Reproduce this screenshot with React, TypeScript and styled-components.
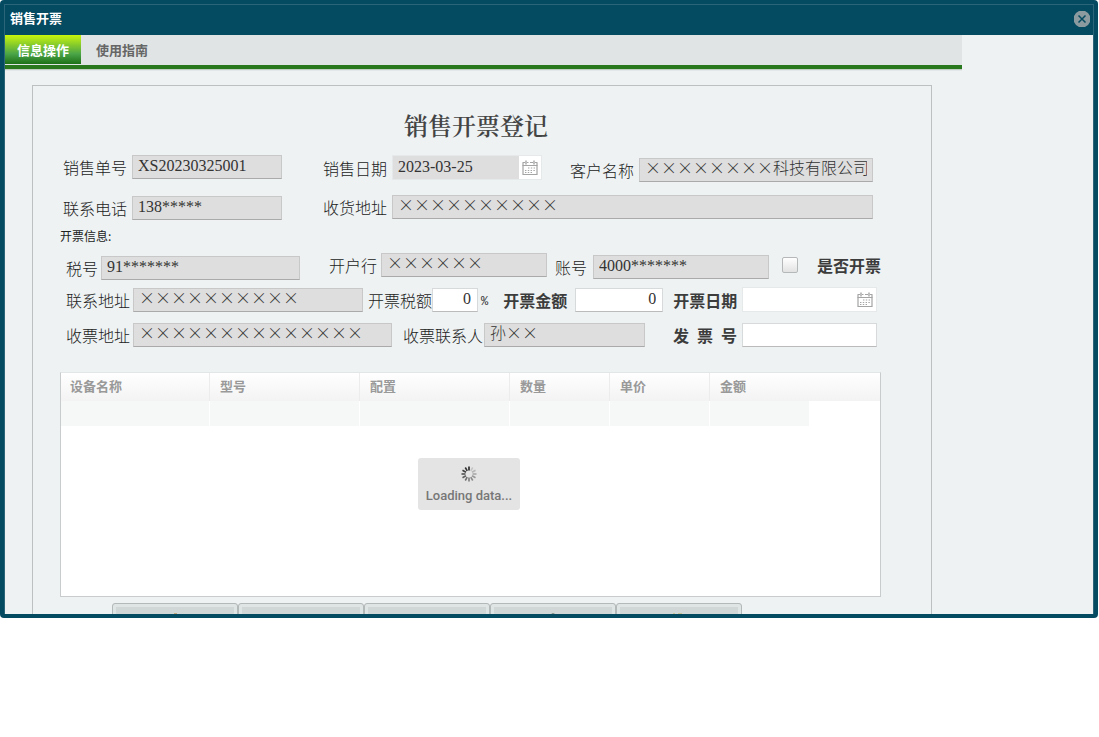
import React from "react";
import styled, { createGlobalStyle, css } from "styled-components";

const GlobalStyle = createGlobalStyle`
  *, *::before, *::after { box-sizing: border-box; }
  body { margin: 0; background: #fff; color: #333; font-family: "Liberation Serif", "Noto Sans CJK SC", serif; }
`;

const uiFont = `"Liberation Sans", "Noto Sans CJK SC", sans-serif`;

const Dialog = styled.section`
  margin-right: 1px;
  padding: 4px;
  background: #044a60;
  border-radius: 4px;
`;

const DialogInner = styled.div`
  display: flex;
  flex-direction: column;
  border: 1px solid #2b6579;
  border-bottom: 0;
`;

const DialogHeader = styled.header`
  display: flex;
  align-items: center;
  justify-content: space-between;
  height: 31px;
  padding: 0 3px 3px 5px;
  border-bottom: 1px solid #2b6579;
`;

const DialogTitle = styled.h1`
  margin: 0;
  font: bold 13px/20px ${uiFont};
  color: #fff;
`;

const CloseButton = styled.button`
  display: flex;
  padding: 0;
  border: 0;
  background: none;
  cursor: pointer;
`;

const Viewport = styled.div`
  height: 579px;
  margin-top: -1px;
  overflow: hidden;
  background: #eef2f3;
`;

const Page = styled.main`
  width: 100%;
  max-width: 957px;
`;

const Tabs = styled.nav`
  display: flex;
  height: 34px;
  background: #e0e4e4;
  border-bottom: 4px solid #2a781d;
  box-shadow: 0 1px 0 #c2d0c4, 0 2px 0 #e2e8e8;
`;

const Tab = styled.button<{ $active?: boolean }>`
  height: 29px;
  padding: 2px 12px 0;
  border: 0;
  background: none;
  color: #666;
  font: bold 13px/20px ${uiFont};
  cursor: pointer;
  & + & { padding: 2px 15px 0; }
  ${(p) =>
    p.$active &&
    css`
      color: #fff;
      background: linear-gradient(#c8f50c, #4ba548 65%, #1d7016);
    `}
`;

const Panel = styled.form`
  height: 700px;
  margin: 16px 30px 0 27px;
  padding: 25px 39px 0 27px;
  border: 1px solid #bcc0c1;
`;

const FormTitle = styled.h2`
  margin: 0;
  text-align: center;
  font: 600 24px/32px "Liberation Serif", "Noto Serif CJK SC", "Noto Sans CJK SC", serif;
  color: #444;
`;

type Align = "start" | "center" | "end";

const Row = styled.div<{ $top: number; $indent: number; $tall?: boolean }>`
  display: flex;
  align-items: flex-start;
  min-height: ${(p) => (p.$tall ? 27 : 25)}px;
  margin-top: ${(p) => p.$top}px;
  padding-left: ${(p) => p.$indent}px;
`;

const FieldBox = styled.div<{ $before: number; $gap: number; $align: Align }>`
  display: flex;
  align-items: center;
  align-self: ${(p) => (p.$align === "center" ? "center" : `flex-${p.$align}`)};
  gap: ${(p) => p.$gap}px;
  margin-left: ${(p) => p.$before}px;
`;

const Label = styled.label<{ $bold?: boolean }>`
  padding-top: 4px;
  color: ${(p) => (p.$bold ? "#3c3c3c" : "#222")};
  font-size: 16px;
  line-height: 20px;
  font-weight: ${(p) => (p.$bold ? "bold" : 300)};
  white-space: pre;
`;

const TextInput = styled.input<{ $w: number; $wide?: boolean }>`
  width: ${(p) => p.$w}px;
  height: 24px;
  padding: 0 5px ${(p) => (p.$wide ? 6 : 2)}px;
  border: 1px solid #c8c8c8;
  border-bottom-color: #aaa;
  border-radius: 0;
  background: #fff;
  color: #333;
  font: 300 16px/18px ${(p) => (p.$wide ? "" : `"Liberation Serif", `)}"Noto Sans CJK SC", serif;
  outline: 0;
  &:read-only { background: #dedede; }
`;

const NumberInput = styled(TextInput)`
  padding-right: 6px;
  border-color: #d6dada;
  border-bottom-color: #bbb;
  text-align: right;
`;

const DateBox = styled.div<{ $w: number }>`
  display: flex;
  width: ${(p) => p.$w}px;
  height: 25px;
  border: 1px solid #e6e9e9;
  background: #fff;
`;

const DateInput = styled.input`
  flex: 1;
  min-width: 0;
  padding: 0 5px 1px;
  border: 0;
  color: #333;
  background: #fff;
  font: 16px/20px "Liberation Serif", serif;
  outline: 0;
  &:read-only { background: #dedede; }
`;

const DateButton = styled.button`
  display: flex;
  align-items: center;
  justify-content: center;
  width: 22px;
  padding: 0;
  border: 0;
  background: #fff;
`;

const CheckBox = styled.input`
  appearance: none;
  width: 16px;
  height: 16px;
  margin: 0;
  border: 1px solid #b5b8b9;
  border-radius: 2px;
  background: linear-gradient(#fff, #e2e2e2);
`;

const SectionNote = styled.p`
  margin: 9px 0 0;
  font: 12px/14px "Noto Sans CJK SC", sans-serif;
  color: #222;
`;

const Percent = styled.span`
  padding: 4px 0 0 3px;
  font: 12px/20px "Liberation Mono", monospace;
`;

const Grid = styled.div`
  position: relative;
  max-width: 821px;
  height: 225px;
  margin-top: 24px;
  border: 1px solid #c9cccd;
  border-top-color: #e2e6e6;
  background: linear-gradient(#fff, #f3f3f3) top / 100% 28px no-repeat #fff;
`;

const DataTable = styled.table`
  width: 749px;
  table-layout: fixed;
  border-collapse: separate;
  border-spacing: 0;
`;

const HeadCell = styled.th<{ $w: number }>`
  width: ${(p) => p.$w}px;
  height: 28px;
  padding: 0 0 0 10px;
  border-right: 1px solid #ececec;
  text-align: left;
  font: bold 13px/20px ${uiFont};
  color: #999;
  &:first-child { padding-left: 9px; }
  &:last-child { border-right: 0; }
`;

const BodyCell = styled.td`
  height: 25px;
  padding: 0;
  background: #f6f8f8;
  border-right: 1px solid #fff;
`;

const Loading = styled.div`
  position: absolute;
  top: 85px;
  left: 357px;
  display: flex;
  flex-direction: column;
  align-items: center;
  width: 102px;
  height: 52px;
  padding-top: 8px;
  border-radius: 3px;
  background: #e4e4e4;
  color: #777;
  font: 500 13px/16px Roboto, sans-serif;
  gap: 6px;
`;

const Actions = styled.div`
  display: flex;
  margin: 6px 0 0 52px;
`;

const ActionButton = styled.button`
  display: flex;
  justify-content: center;
  align-items: flex-start;
  width: 126px;
  height: 40px;
  padding: 9px 0 0;
  border: 1px solid #b3b8b9;
  border-radius: 3px;
  background: #d1d6d6;
  box-shadow: inset 0 0 0 3px #dfe4e4;
`;

const CalendarIcon = () => (
  <svg width="16" height="16" viewBox="0 0 16 16" fill="none" stroke="#a4a4a4" aria-hidden="true">
    <path d="M1 3v12M15 3v12M0.5 14.5h15" strokeWidth="1.2" />
    <path d="M0.5 2.5h2.5M5 2.5h1.5M8 2.5h3M13 2.5h2.5M0.5 5.5h15" strokeWidth="1.2" />
    <path d="M4 0.5v4M12 0.5v4" strokeWidth="1.4" />
    <path d="M6 8h8M3 10.5h11M3 12.5h8" strokeDasharray="1.4 1.4" strokeWidth="1.2" />
  </svg>
);

const CloseIcon = () => (
  <svg width="16" height="16" viewBox="0 0 16 16" aria-hidden="true">
    <path d="M5 0h6l3 2 2 3v6l-2 3-3 2H5l-3-2-2-3V5l2-3z" fill="#8b9a9e" />
    <path d="M4.5 4.5l7 7M11.5 4.5l-7 7" stroke="#044a60" strokeWidth="1.5" />
  </svg>
);

const Spinner = () => (
  <svg width="16" height="16" viewBox="0 0 16 16" aria-hidden="true">
    {Array.from({ length: 12 }, (_, i) => (
      <line
        key={i}
        x1="8"
        y1="0.5"
        x2="8"
        y2="4.5"
        stroke="#222"
        strokeWidth="1.6"
        opacity={i === 0 ? 1 : 0.08 + (i / 12) * 0.92}
        transform={`rotate(${i * 30} 8 8)`}
      />
    ))}
  </svg>
);

const ActionIcon = ({ kind }: { kind: string }) => (
  <svg width="16" height="16" viewBox="0 0 16 16" aria-hidden="true">
    {kind === "edit" && <path d="M7 0h3v5l5 5H2l5-5z" fill="#c3a97c" />}
    {kind === "check" && <path d="M7 0h2l3 4-4 8-5-5z" fill="#8a9a90" />}
    {kind === "key" && <path d="M2 0h2v3h3V0h4v3l3 4H2z" fill="#c9c69a" />}
  </svg>
);

interface FieldProps {
  id: string;
  label: string;
  before?: number;
  gap?: number;
  bold?: boolean;
  align?: Align;
  children: React.ReactNode;
}

const Field = ({ id, label, before = 0, gap = 5, bold, align = "start", children }: FieldProps) => (
  <FieldBox $before={before} $gap={gap} $align={align}>
    <Label htmlFor={id} $bold={bold}>{label}</Label>
    {children}
  </FieldBox>
);

const columns: [string, number][] = [
  ["设备名称", 149],
  ["型号", 150],
  ["配置", 150],
  ["数量", 100],
  ["单价", 100],
  ["金额", 100],
];

const actions = [
  { name: "修改", icon: "edit" },
  { name: "保存", icon: "" },
  { name: "打印", icon: "" },
  { name: "确认", icon: "check" },
  { name: "关闭", icon: "key" },
];

export default function App() {
  return (
    <>
      <GlobalStyle />
      <Dialog>
        <DialogInner>
          <DialogHeader>
            <DialogTitle>销售开票</DialogTitle>
            <CloseButton aria-label="关闭"><CloseIcon /></CloseButton>
          </DialogHeader>
          <Viewport>
            <Page>
              <Tabs>
                <Tab $active>信息操作</Tab>
                <Tab>使用指南</Tab>
              </Tabs>
              <Panel>
                <FormTitle>销售开票登记</FormTitle>
                <Row $top={12} $indent={3} $tall>
                  <Field id="orderNo" label="销售单号">
                    <TextInput id="orderNo" $w={150} readOnly defaultValue="XS20230325001" />
                  </Field>
                  <Field id="saleDate" label="销售日期" before={41}>
                    <DateBox $w={150}>
                      <DateInput id="saleDate" readOnly defaultValue="2023-03-25" />
                      <DateButton type="button" aria-label="选择日期"><CalendarIcon /></DateButton>
                    </DateBox>
                  </Field>
                  <Field id="customer" label="客户名称" before={28} align="end">
                    <TextInput id="customer" $w={234} $wide readOnly defaultValue="××××××××科技有限公司" />
                  </Field>
                </Row>
                <Row $top={13} $indent={3}>
                  <Field id="phone" label="联系电话" align="end">
                    <TextInput id="phone" $w={150} readOnly defaultValue="138*****" />
                  </Field>
                  <Field id="shipTo" label="收货地址" before={41}>
                    <TextInput id="shipTo" $w={481} $wide readOnly defaultValue="××××××××××" />
                  </Field>
                </Row>
                <SectionNote>开票信息:</SectionNote>
                <Row $top={10} $indent={6} $tall>
                  <Field id="taxNo" label="税号" gap={3} align="end">
                    <TextInput id="taxNo" $w={199} readOnly defaultValue="91*******" />
                  </Field>
                  <Field id="bank" label="开户行" before={29} gap={4}>
                    <TextInput id="bank" $w={166} $wide readOnly defaultValue="××××××" />
                  </Field>
                  <Field id="account" label="账号" before={8} gap={6} align="center">
                    <TextInput id="account" $w={176} readOnly defaultValue="4000*******" />
                  </Field>
                  <FieldBox $before={13} $gap={19} $align="start">
                    <CheckBox id="invoiced" type="checkbox" />
                    <Label htmlFor="invoiced" $bold>是否开票</Label>
                  </FieldBox>
                </Row>
                <Row $top={7} $indent={6}>
                  <Field id="contactAddr" label="联系地址" gap={3} align="end">
                    <TextInput id="contactAddr" $w={230} $wide readOnly defaultValue="××××××××××" />
                  </Field>
                  <Field id="taxRate" label="开票税额" before={5} gap={0} align="end">
                    <NumberInput id="taxRate" $w={46} defaultValue="0" />
                    <Percent>%</Percent>
                  </Field>
                  <Field id="amount" label="开票金额" before={15} gap={8} bold align="end">
                    <NumberInput id="amount" $w={88} defaultValue="0" />
                  </Field>
                  <Field id="invoiceDate" label="开票日期" before={10} gap={5} bold>
                    <DateBox $w={135}>
                      <DateInput id="invoiceDate" />
                      <DateButton type="button" aria-label="选择日期"><CalendarIcon /></DateButton>
                    </DateBox>
                  </Field>
                </Row>
                <Row $top={11} $indent={6}>
                  <Field id="mailAddr" label="收票地址" gap={3}>
                    <TextInput id="mailAddr" $w={259} $wide readOnly defaultValue="××××××××××××××" />
                  </Field>
                  <Field id="receiver" label="收票联系人" before={11} gap={1}>
                    <TextInput id="receiver" $w={161} $wide readOnly defaultValue="孙××" />
                  </Field>
                  <Field id="invoiceNo" label="发  票  号" before={28} gap={5} bold>
                    <NumberInput id="invoiceNo" $w={135} />
                  </Field>
                </Row>
                <Grid>
                  <DataTable>
                    <thead>
                      <tr>
                        {columns.map(([name, w]) => <HeadCell key={name} $w={w}>{name}</HeadCell>)}
                      </tr>
                    </thead>
                    <tbody>
                      <tr>
                        {columns.map(([name]) => <BodyCell key={name} />)}
                      </tr>
                    </tbody>
                  </DataTable>
                  <Loading role="status">
                    <Spinner />
                    Loading data...
                  </Loading>
                </Grid>
                <Actions>
                  {actions.map((a) => (
                    <ActionButton key={a.name} type="button" aria-label={a.name}>
                      <ActionIcon kind={a.icon} />
                    </ActionButton>
                  ))}
                </Actions>
              </Panel>
            </Page>
          </Viewport>
        </DialogInner>
      </Dialog>
    </>
  );
}
